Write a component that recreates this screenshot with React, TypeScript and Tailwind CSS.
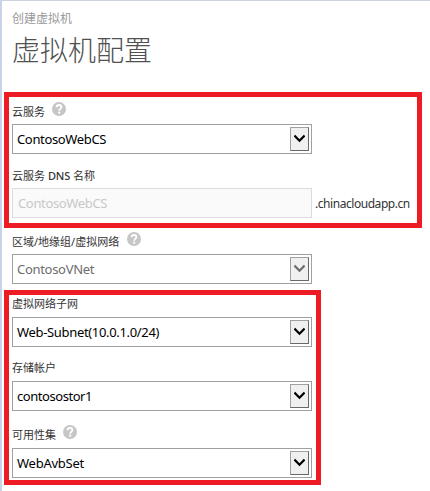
import type { ReactNode } from "react";

const FONT = "font-['Noto_Sans','Noto_Sans_CJK_SC',sans-serif]";

function HelpIcon() {
  return (
    <svg className="mb-[3px] h-[14px] w-[14px] shrink-0" viewBox="0 0 14 14" fill="none">
      <circle cx="7" cy="7" r="7" fill="#c6c6c6" />
      <path d="M4.6 5.2C4.6 3.7 5.6 3 7 3S9.4 3.7 9.4 5C9.4 6.6 7.2 6.7 7.2 8.8" stroke="#fff" strokeWidth="1.9" />
      <rect x="6.1" y="9.7" width="2.1" height="1.9" fill="#fff" />
    </svg>
  );
}

function Label({ children, className }: { children: ReactNode; className: string }) {
  return (
    <div className={`flex items-end whitespace-nowrap text-[11px] leading-[14px] text-[#333] ${className}`}>
      {children}
    </div>
  );
}

function Select({ value, muted, spacing }: { value: string; muted?: boolean; spacing: string }) {
  return (
    <div className="flex h-[30px] w-[300px] items-center justify-between border border-[#a0a0a0] bg-white pl-1 pr-0.5">
      <span className={`text-[13px] leading-5 ${spacing} ${muted ? "text-[#6d6d6d]" : "text-black"}`}>{value}</span>
      <span className="flex h-6 w-[19px] items-start justify-center border border-b-[#696969] border-l-[#a0a0a0] border-r-[#696969] border-t-[#a0a0a0] bg-[#f0f0f0] pt-1.5">
        <svg className="h-[9px] w-[11px]" viewBox="0 0 11 9" fill="none">
          <path d="M0.4 1.6L5.5 6.7L10.6 1.6" stroke={muted ? "#6d6d6d" : "#000"} strokeWidth="2.2" />
        </svg>
      </span>
    </div>
  );
}

export default function App() {
  return (
    <main className={`h-[491px] w-[430px] overflow-hidden border-l-2 border-t border-l-[#c9d3e8] border-t-[#ccd2de] bg-white pl-0.5 ${FONT}`}>
      <header className="h-[91px] pl-2 pt-[10px]">
        <p className="text-[12px] leading-4 text-[#999]">创建虚拟机</p>
        <h1 className="mt-[3px] text-[28px] font-light leading-10 text-[#505050]">虚拟机配置</h1>
      </header>

      <section className="h-[136px] w-[418px] border-[5px] border-[#ed1c24] pl-[3px]">
        <Label className="h-[27px] gap-[7px] pb-[5px]">
          <span>云服务</span>
          <HelpIcon />
        </Label>
        <Select value="ContosoWebCS" spacing="tracking-[-0.35px]" />
        <Label className="h-[34px] pb-[5px]">
          <span>
            云服务 <span className="font-medium tracking-[-0.15px]">DNS</span> 名称
          </span>
        </Label>
        <div className="flex items-center gap-[3px]">
          <div className="flex h-[30px] w-[300px] shrink-0 items-center border border-[#dcdcdc] bg-[#fafafa] pl-[5px] text-[13px] leading-5 tracking-[-0.35px] text-[#c8c8c8]">
            ContosoWebCS
          </div>
          <span className="pt-0.5 text-[12px] leading-5 tracking-[-0.45px] text-[#333]">.chinacloudapp.cn</span>
        </div>
      </section>

      <section className="pb-1.5 pl-2">
        <Label className="h-[26px] gap-2 pb-[5px]">
          <span>区域/地缘组/虚拟网络</span>
          <HelpIcon />
        </Label>
        <Select value="ContosoVNet" muted spacing="tracking-[-0.3px]" />
      </section>

      <section className="h-[195px] w-[317px] border-[5px] border-[#ed1c24] pl-[3px]">
        <Label className="h-[22px] pb-[6px]">虚拟网络子网</Label>
        <Select value="Web-Subnet(10.0.1.0/24)" spacing="tracking-[-0.33px]" />
        <Label className="h-[34px] pb-[6px]">存储帐户</Label>
        <Select value="contosostor1" spacing="tracking-[-0.45px]" />
        <Label className="h-[37px] gap-[7px] pb-[6px]">
          <span>可用性集</span>
          <HelpIcon />
        </Label>
        <Select value="WebAvbSet" spacing="tracking-[-0.25px]" />
      </section>
    </main>
  );
}
